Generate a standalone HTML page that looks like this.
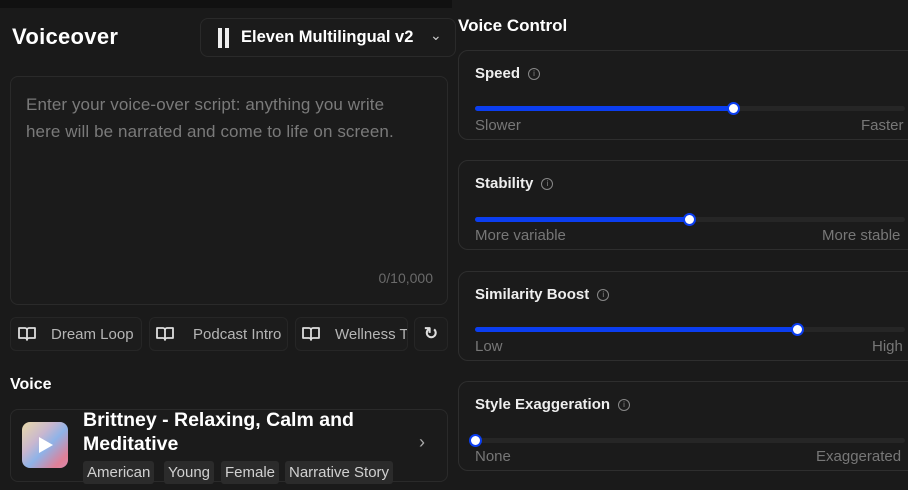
<!DOCTYPE html>
<html><head><meta charset="utf-8"><style>
*{margin:0;padding:0;box-sizing:border-box}
body{width:908px;height:490px;background:#1a1a1a;font-family:"Liberation Sans",sans-serif;position:relative;overflow:hidden;color:#fff}
.a{position:absolute}
.top{left:0;top:0;width:452px;height:8px;background:#111}
.box{border:1px solid #2a2a2a;border-radius:8px;background:#1b1b1b}
.chip{border:1px solid #262626;border-radius:6px;background:#1c1c1c;height:34px;top:317px;color:#b5b5b5;font-size:15px;display:flex;align-items:center}
.tag{top:461px;height:23px;background:#2b2b2b;border-radius:3px;color:#d0d0d0;font-size:15px;padding:0 4px;line-height:23px}
.card{left:458px;width:460px;height:90px;border:1px solid #2e2e2e;border-radius:10px;background:#1b1b1b}
.card .t{position:absolute;left:16px;top:14px;font-size:15px;font-weight:bold;color:#eee;display:flex;align-items:center;gap:8px}
.i{width:12px;height:12px;border:1px solid #888;border-radius:50%;font-size:8px;color:#888;text-align:center;line-height:10px;font-weight:normal}
.track{position:absolute;left:16px;width:430px;height:5px;background:#262626;border-radius:3px;top:55px}
.fill{position:absolute;left:0;top:0;height:5px;background:#0b3ef0;border-radius:3px}
.th{position:absolute;top:-4px;width:13px;height:13px;border-radius:50%;background:#fff;border:2px solid #0b3ef0;margin-left:-6px}
.lbl{position:absolute;top:66px;font-size:15px;color:#777}
</style></head><body>
<div class="a top"></div>
<div class="a" style="left:12px;top:24px;font-size:22px;font-weight:bold;letter-spacing:0.3px">Voiceover</div>
<div class="a box" style="left:200px;top:18px;width:256px;height:39px;display:flex;align-items:center">
 <div style="width:4px;height:20px;background:#eee;margin-left:17px"></div><div style="width:4px;height:20px;background:#eee;margin-left:3px"></div>
 <span style="font-size:16.5px;font-weight:bold;margin-left:12px">Eleven Multilingual v2</span>
 <span style="position:absolute;left:229px;top:8px;color:#ccc;font-size:14px">&#8964;</span>
</div>
<div class="a box" style="left:10px;top:76px;width:438px;height:229px">
 <div class="a" style="left:15px;top:14px;font-size:17px;line-height:27px;color:#7a7a7a;letter-spacing:0.1px">Enter your voice-over script: anything you write<br>here will be narrated and come to life on screen.</div>
 <div class="a" style="right:14px;top:193px;font-size:14px;color:#6a6a6a">0/10,000</div>
</div>
<svg width="0" height="0" style="position:absolute"><symbol id="bk" viewBox="0 0 18 14"><path d="M1 1h6a2 2 0 0 1 2 2v10a2 2 0 0 0-2-2H1z M17 1h-6a2 2 0 0 0-2 2v10a2 2 0 0 1 2-2h6z" fill="none" stroke="#ddd" stroke-width="1.8" stroke-linejoin="round"/></symbol></svg>
<div class="a chip" style="left:10px;width:132px"><svg width="18" height="14" style="margin:0 15px 0 7px"><use href="#bk"/></svg>Dream Loop</div>
<div class="a chip" style="left:149px;width:139px"><svg width="18" height="14" style="margin:0 19px 0 6px"><use href="#bk"/></svg>Podcast Intro</div>
<div class="a chip" style="left:295px;width:113px;overflow:hidden;white-space:nowrap"><svg width="18" height="14" style="margin:0 15px 0 6px;flex:none"><use href="#bk"/></svg>Wellness T</div>
<div class="a chip" style="left:414px;width:34px;justify-content:center;color:#ddd;font-size:17px;font-weight:bold">&#8635;</div>
<div class="a" style="left:10px;top:376px;font-size:16px;font-weight:bold">Voice</div>
<div class="a box" style="left:10px;top:409px;width:438px;height:73px">
 <div class="a" style="left:11px;top:12px;width:46px;height:46px;border-radius:8px;background:linear-gradient(135deg,#e8d9a8,#c9b7cf 35%,#8fb3e8 55%,#e07f96 85%,#d98ab0)"><div style="position:absolute;left:17px;top:15px;width:0;height:0;border-left:14px solid #fff;border-top:8px solid transparent;border-bottom:8px solid transparent"></div></div>
 <div class="a" style="left:72px;top:-2px;font-size:19.5px;font-weight:bold;line-height:24px">Brittney - Relaxing, Calm and<br>Meditative</div>
 <div class="a" style="left:408px;top:22px;color:#aaa;font-size:18px">&#8250;</div>
</div>
<div class="a tag" style="left:83px">American</div>
<div class="a tag" style="left:164px">Young</div>
<div class="a tag" style="left:221px">Female</div>
<div class="a tag" style="left:285px">Narrative Story</div>

<div class="a" style="left:458px;top:16px;font-size:17px;font-weight:bold">Voice Control</div>
<div class="a card" style="top:50px"><div class="t">Speed <span class="i">i</span></div><div class="track"><div class="fill" style="width:258px"></div><div class="th" style="left:258px"></div></div><div class="lbl" style="left:16px">Slower</div><div class="lbl" style="left:402px">Faster</div></div>
<div class="a card" style="top:160px"><div class="t">Stability <span class="i">i</span></div><div class="track" style="top:56px"><div class="fill" style="width:214px"></div><div class="th" style="left:214px"></div></div><div class="lbl" style="left:16px">More variable</div><div class="lbl" style="left:363px">More stable</div></div>
<div class="a card" style="top:271px"><div class="t">Similarity Boost <span class="i">i</span></div><div class="track"><div class="fill" style="width:322px"></div><div class="th" style="left:322px"></div></div><div class="lbl" style="left:16px">Low</div><div class="lbl" style="left:413px">High</div></div>
<div class="a card" style="top:381px"><div class="t">Style Exaggeration <span class="i">i</span></div><div class="track" style="top:56px"><div class="th" style="left:0"></div></div><div class="lbl" style="left:16px">None</div><div class="lbl" style="left:357px">Exaggerated</div></div>
</body></html>
